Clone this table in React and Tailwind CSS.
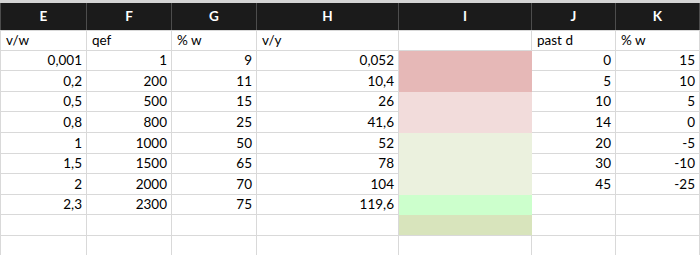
import React from 'react';

const COLS = ['E', 'F', 'G', 'H', 'I', 'J', 'K'];
const WIDTHS = ['w-[87px] border-l', 'w-[85px]', 'w-[85px]', 'w-[142px]', 'w-[133px]', 'w-[84px]', 'w-[84px]'];

// label row, then values; fill = colour of column I (hides its gridlines)
const ROWS = [
  { h: 'h-[20px]', cells: ['v/w', 'qef', '% w', 'v/y', '', 'past d', '% w'], label: true },
  { h: 'h-[20px]', cells: ['0,001', '1', '9', '0,052', '', '0', '15'], fill: 'bg-[#e6b8b7] border-[#e6b8b7]' },
  { h: 'h-[21px]', cells: ['0,2', '200', '11', '10,4', '', '5', '10'], fill: 'bg-[#e6b8b7] border-[#e6b8b7]' },
  { h: 'h-[20px]', cells: ['0,5', '500', '15', '26', '', '10', '5'], fill: 'bg-[#f2dcdb] border-[#f2dcdb]' },
  { h: 'h-[21px]', cells: ['0,8', '800', '25', '41,6', '', '14', '0'], fill: 'bg-[#f2dcdb] border-[#f2dcdb]' },
  { h: 'h-[21px]', cells: ['1', '1000', '50', '52', '', '20', '-5'], fill: 'bg-[#ebf1de] border-[#ebf1de]' },
  { h: 'h-[20px]', cells: ['1,5', '1500', '65', '78', '', '30', '-10'], fill: 'bg-[#ebf1de] border-[#ebf1de]' },
  { h: 'h-[21px]', cells: ['2', '2000', '70', '104', '', '45', '-25'], fill: 'bg-[#ebf1de] border-[#ebf1de]' },
  { h: 'h-[20px]', cells: ['2,3', '2300', '75', '119,6', '', '', ''], fill: 'bg-[#ccffcc] border-[#ccffcc]' },
  { h: 'h-[21px]', cells: ['', '', '', '', '', '', ''], fill: 'bg-[#d8e4bc] border-[#d8e4bc] border-b-[#d9d9d9]' },
  { h: 'h-[21px]', cells: ['', '', '', '', '', '', ''] },
];

function Row({ row }) {
  return (
    <div className={`flex ${row.h}`}>
      {row.cells.map((c, i) => {
        const isFill = i === 4 && row.fill;
        return (
          <div
            key={i}
            className={`${WIDTHS[i]} shrink-0 flex items-center pt-px border-r border-b ${
              isFill ? row.fill : 'border-[#d9d9d9]'
            } ${row.label ? 'justify-start pl-[5px]' : 'justify-end pr-[4px]'}`}
          >
            {c}
          </div>
        );
      })}
    </div>
  );
}

export default function App() {
  return (
    <div className="w-[700px] h-[255px] overflow-hidden bg-white text-black text-[13.5px] leading-none font-['Lato',sans-serif]">
      <div className="h-[3px] bg-[#d4d4d4]" />
      <div className="flex h-[28px] bg-[#1b1b1b] border-b border-[#d9d9d9]">
        {COLS.map((c, i) => (
          <div
            key={c}
            className={`${WIDTHS[i]} shrink-0 flex items-center justify-center border-r border-[#4d4d4d] ${
              i === 0 ? 'border-l-[#4d4d4d]' : ''
            } text-white font-bold text-[13.5px]`}
          >
            {c}
          </div>
        ))}
      </div>
      {ROWS.map((r, i) => (
        <Row key={i} row={r} />
      ))}
    </div>
  );
}
